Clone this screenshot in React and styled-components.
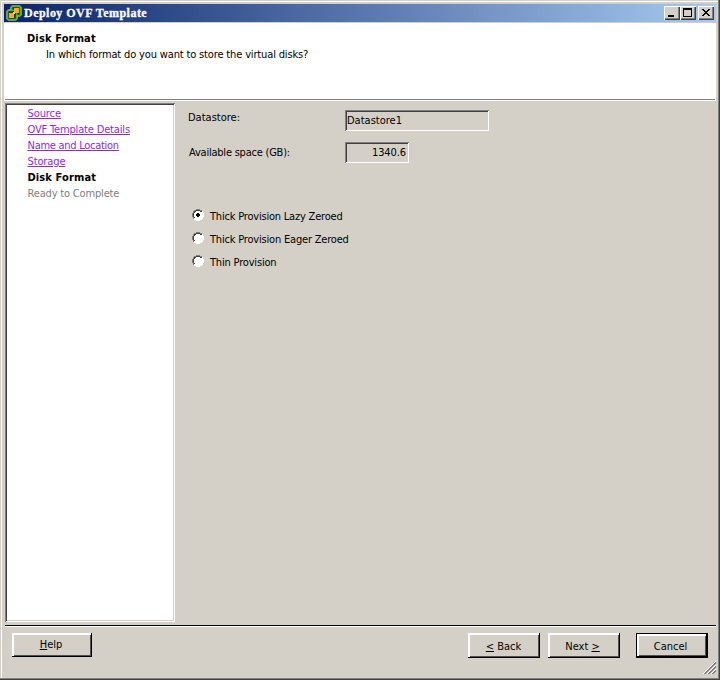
import React, { useState } from "react";
import styled, { createGlobalStyle } from "styled-components";

const GlobalStyle = createGlobalStyle`
  * { box-sizing: border-box; }
  body { margin: 0; overflow: hidden; }
`;

const Window = styled.div`
  width: 720px;
  height: 680px;
  display: flex;
  background: #404040;
  padding: 0 1px 1px 0;
  font: 11px/16px "DejaVu Sans Condensed", "DejaVu Sans", sans-serif;
  font-stretch: condensed;
  color: #000;
  cursor: default;
`;

const Frame = styled.div`
  flex: 1;
  display: flex;
  flex-direction: column;
  background: #d4d0c8;
  border-right: 1px solid #808080;
  border-bottom: 1px solid #808080;
  padding: 4px 2px 2px 4px;
  box-shadow: inset 1px 1px #d4d0c8, inset 2px 2px #fff;
`;

const TitleBar = styled.div`
  height: 18px;
  display: flex;
  align-items: center;
  padding: 0 2px;
  background: linear-gradient(to right, #0a246a, #a6caf0);
`;

const Title = styled.div`
  flex: 1;
  margin-left: 2px;
  color: #fff;
  font: bold 12px/16px "Liberation Serif", serif;
  letter-spacing: ${props => props.$spacing}px;
  -webkit-text-stroke: 0.3px #fff;
  white-space: pre;
`;

const CaptionButton = styled.button`
  width: 16px;
  height: 14px;
  padding: 0;
  border: 0;
  margin-left: ${props => (props.$gap ? "2px" : 0)};
  background: #d4d0c8;
  box-shadow: inset 1px 1px #fff, inset -1px -1px #404040, inset -2px -2px #808080;

  svg { display: block; }
`;

const Header = styled.div`
  height: 78px;
  margin-top: 1px;
  padding: 8px 1px 0;
  background: #fff;
  display: flex;
  flex-direction: column;
`;

const Text = styled.span`
  display: block;
  white-space: pre;
  letter-spacing: ${props => props.$spacing || 0}px;
  font-weight: ${props => (props.$bold ? "bold" : "normal")};
`;

const Heading = styled(Text)`
  margin-left: 22px;
`;

const Question = styled(Text)`
  margin-left: 41px;
`;

const HeaderLine = styled.div`
  height: 1px;
  margin-top: auto;
  margin-bottom: 1px;
  background: #808080;
`;

const Body = styled.div`
  display: flex;
  height: 519px;
  margin-top: 2px;
  padding-left: 1px;
`;

const Steps = styled.div`
  width: 170px;
  background: #fff;
  padding: 3px 0 0 22.5px;
  box-shadow: inset 1px 1px #808080, inset -1px -1px #fff, inset 2px 2px #404040, inset -2px -2px #d4d0c8;
`;

const Step = styled(Text)`
  height: 16px;
  color: ${props => props.$color};
  text-decoration: ${props => (props.$link ? "underline" : "none")};
  text-decoration-thickness: 1px;
  text-underline-offset: 1px;
`;

const Content = styled.div`
  flex: 1;
  padding: 7px 0 0 13px;
`;

const Field = styled.div`
  display: flex;
  height: 32px;
`;

const Label = styled(Text)`
  width: 157px;
  padding-top: ${props => props.$drop || 0}px;
  padding-left: ${props => props.$indent || 0}px;
  line-height: 15px;
`;

const ReadOnlyBox = styled.div`
  width: ${props => props.$width}px;
  height: 21px;
  padding: 3px 3px 0 2px;
  display: flex;
  justify-content: ${props => (props.$right ? "flex-end" : "flex-start")};
  box-shadow: inset 1px 1px #808080, inset -1px -1px #fff, inset 2px 2px #404040;
`;

const Options = styled.div`
  margin: 33px 0 0 4px;
`;

const Option = styled.label`
  height: 23px;
  display: flex;

  svg { flex: none; margin: 2px 6px 0 0; }
`;

const OptionText = styled(Text)`
  line-height: 20px;
`;

const Divider = styled.div`
  height: 2px;
  margin: 3px 0 0 1px;
  background: #000;
  border-bottom: 1px solid #fff;
`;

const Footer = styled.div`
  flex: 1;
  display: flex;
  padding: 6px 0 0 8px;
`;

const Button = styled.button`
  width: ${props => props.$width}px;
  height: ${props => props.$height || 25}px;
  margin-left: ${props => props.$left || 0};
  padding: ${props => props.$pad || "2px 2px 0 0"};
  border: ${props => (props.$default ? "1px solid #000" : 0)};
  background: #d4d0c8;
  color: #000;
  font: inherit;
  box-shadow: inset -1px -1px #000, inset 2px 2px #fff, inset -2px -2px #505050;
  display: flex;
  align-items: center;
  justify-content: center;

  u { text-decoration-thickness: 1px; text-underline-offset: 1px; }
`;

const Grip = styled.svg`
  align-self: flex-end;
  margin-left: -5px;
  margin-bottom: 2px;
`;

const LogoIcon = () => (
  <svg width="16" height="16" viewBox="0 0 16 16">
    <rect x="4.5" y="0.5" width="11" height="11" rx="2" fill="#dfe9cf" />
    <rect x="0.5" y="4.5" width="11" height="11" rx="2" fill="#dfe9cf" />
    <rect x="5.5" y="1.5" width="9" height="9" rx="1" fill="#16361f" stroke="#5fae1e" strokeWidth="1.6" />
    <rect x="1.5" y="5.5" width="9" height="9" rx="1" fill="#16361f" stroke="#5fae1e" strokeWidth="1.6" />
    <path d="M6 6h4v4H6z" fill="#16361f" />
    <path d="M8 3h5v5H9V7H8z" fill="#f9ab1f" />
    <path d="M3 8h4v1h1v4H3z" fill="#f9ab1f" />
    <path d="M7 7h2v2H7z" fill="#ffd65a" />
  </svg>
);

const RadioIcon = ({ checked }) => (
  <svg width="12" height="12" viewBox="0 0 12 12" shapeRendering="crispEdges">
    <path d="M4 1h4v1h2v2h1v4h-1v2H8v1H4v-1H2V8H1V4h1V2h2z" fill="#fff" />
    <path d="M4 0h4v1H4zM2 1h2v1H2zM8 1h2v1H8zM1 2h1v2H1zM0 4h1v4H0zM1 8h1v2H1z" fill="#808080" />
    <path d="M4 1h4v1H4zM2 2h2v1H2zM8 2h2v1H8zM2 3h1v1H2zM1 4h1v4H1zM2 8h1v1H2z" fill="#404040" />
    <path d="M10 2h1v2h-1zM11 4h1v4h-1zM10 8h1v2h-1zM8 10h2v1H8zM4 11h4v1H4zM2 10h2v1H2z" fill="#fff" />
    {checked && <path d="M5 4h2v1h1v2H7v1H5V7H4V5h1z" fill="#000" />}
  </svg>
);

const steps = [
  { name: "Source", link: true, spacing: -0.1 },
  { name: "OVF Template Details", link: true, spacing: -0.16 },
  { name: "Name and Location", link: true, spacing: -0.27 },
  { name: "Storage", link: true, spacing: -0.12 },
  { name: "Disk Format", bold: true, color: "#000", spacing: 0.12 },
  { name: "Ready to Complete", color: "#808080", spacing: -0.17 },
];

const formats = [
  { name: "Thick Provision Lazy Zeroed", spacing: -0.2 },
  { name: "Thick Provision Eager Zeroed", spacing: -0.19 },
  { name: "Thin Provision", spacing: -0.18 },
];

const App = () => {
  const [format, setFormat] = useState(0);

  return (
    <Window>
      <GlobalStyle />
      <Frame>
        <TitleBar>
          <LogoIcon />
          <Title $spacing={0.47}>Deploy OVF Template</Title>
          <CaptionButton aria-label="Minimize">
            <svg width="16" height="14"><path d="M4 9h6v2H4z" /></svg>
          </CaptionButton>
          <CaptionButton aria-label="Maximize">
            <svg width="16" height="14" shapeRendering="crispEdges">
              <path d="M3 2h9v9H3zM4 4v6h7V4z" fillRule="evenodd" />
            </svg>
          </CaptionButton>
          <CaptionButton aria-label="Close" $gap>
            <svg width="16" height="14" shapeRendering="crispEdges">
              <path d="M4 3h2v1h1v1h2V4h1V3h2v1h-1v1h-1v1H9v1h1v1h1v1h1v1h-2V9H9V8H7v1H6v1H4V9h1V8h1V7h1V6H6V5H5V4H4z" />
            </svg>
          </CaptionButton>
        </TitleBar>
        <Header>
          <Heading $bold $spacing={0.14}>Disk Format</Heading>
          <Question $spacing={-0.15}>In which format do you want to store the virtual disks?</Question>
          <HeaderLine />
        </Header>
        <Body>
          <Steps>
            {steps.map(step => (
              <Step
                key={step.name}
                $link={step.link}
                $bold={step.bold}
                $color={step.color || "#8a2be2"}
                $spacing={step.spacing}
              >
                {step.name}
              </Step>
            ))}
          </Steps>
          <Content>
            <Field>
              <Label>Datastore:</Label>
              <ReadOnlyBox $width={144}><Text>Datastore1</Text></ReadOnlyBox>
            </Field>
            <Field>
              <Label $indent={1} $drop={3} $spacing={-0.22}>Available space (GB):</Label>
              <ReadOnlyBox $width={64} $right><Text $spacing={-0.1}>1340.6</Text></ReadOnlyBox>
            </Field>
            <Options>
              {formats.map((item, i) => (
                <Option key={item.name} onClick={() => setFormat(i)}>
                  <RadioIcon checked={format === i} />
                  <OptionText $spacing={item.spacing}>{item.name}</OptionText>
                </Option>
              ))}
            </Options>
          </Content>
        </Body>
        <Divider />
        <Footer>
          <Button $width={80} $height={24} $pad="0 2px 0 0"><Text><u>H</u>elp</Text></Button>
          <Button $width={72} $left="auto" $pad="2px 1px 0 0"><Text><u>&lt;</u> Back</Text></Button>
          <Button $width={72} $left="8px" $pad="2px 3px 0 0"><Text>Next <u>&gt;</u></Text></Button>
          <Button $width={72} $left="16px" $pad="2px 3px 0 0" $default><Text>Cancel</Text></Button>
          <Grip width="13" height="13">
            <path d="M0 13L13 0M4 13L13 4M8 13L13 8" stroke="#fff" />
            <path d="M1 13L13 1M2 13L13 2M5 13L13 5M6 13L13 6M9 13L13 9M10 13L13 10" stroke="#808080" />
          </Grip>
        </Footer>
      </Frame>
    </Window>
  );
};

export default App;
